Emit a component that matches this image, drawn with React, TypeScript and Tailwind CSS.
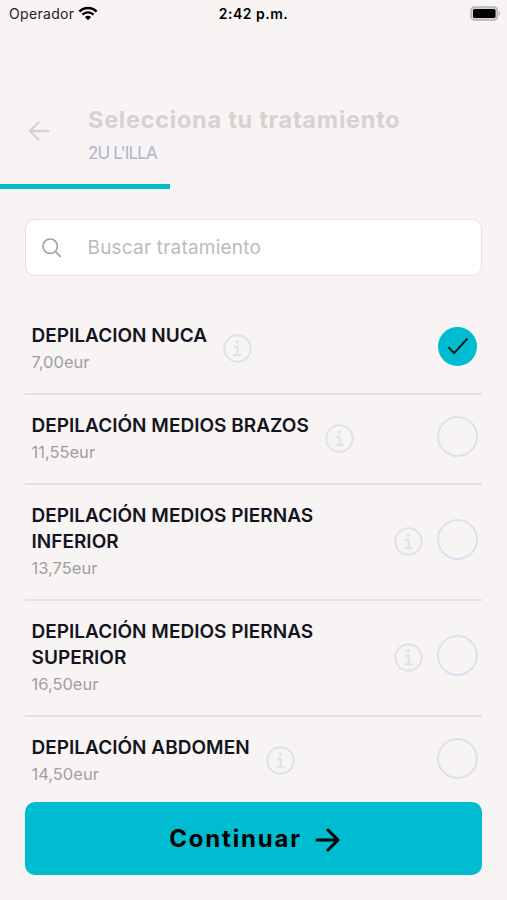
import React, {useState} from "react";


interface TreatmentItem {
    id: number
    name: string
    price: string
}

interface TreatmentProps {
    treatment: TreatmentItem
    checked: boolean
    toggle: (id: number) => void
}

const treatments: TreatmentItem[] = [
    {id: 1, name: 'DEPILACION NUCA', price: '7,00eur'},
    {id: 2, name: 'DEPILACIÓN MEDIOS BRAZOS', price: '11,55eur'},
    {id: 3, name: 'DEPILACIÓN MEDIOS PIERNAS INFERIOR', price: '13,75eur'},
    {id: 4, name: 'DEPILACIÓN MEDIOS PIERNAS SUPERIOR', price: '16,50eur'},
    {id: 5, name: 'DEPILACIÓN ABDOMEN', price: '14,50eur'},
]

function StatusBar() {
    return (
        <div className="grid h-7 grid-cols-3 items-center text-[14px] leading-7 text-[#222]">
            <div className="flex items-center pl-[9px]">
                <span className="tracking-[0.33px]">Operador</span>
                <svg className="ml-[4px] -mt-[2px]" width="20" height="15" viewBox="0 0 20 15" fill="none" stroke="#000">
                    <path d="M1.4 5.6a12.2 12.2 0 0 1 17.2 0" strokeWidth="2.6"/>
                    <path d="M4.4 8.7a7.9 7.9 0 0 1 11.2 0" strokeWidth="2.4"/>
                    <path d="M10 14.2 6.9 11.1a4.4 4.4 0 0 1 6.2 0Z" fill="#000" stroke="none"/>
                </svg>
            </div>
            <span className="text-center font-semibold tracking-[0.5px] text-black">2:42 p.m.</span>
            <svg className="mr-[6px] -mt-[2px] justify-self-end" width="31" height="15" viewBox="0 0 31 15">
                <rect x="1" y="1" width="26.5" height="13" rx="3.6" fill="#d5d2d1" stroke="#b5b3b2" strokeWidth="1.4"/>
                <rect x="3" y="3" width="22.5" height="9" rx="1.6" fill="#000"/>
                <path d="M28.8 5.2c1.8.9 1.8 3.7 0 4.6Z" fill="#b5b3b2"/>
            </svg>
        </div>
    )
}

function InfoIcon() {
    return (
        <svg className="mr-[14px] mb-[2px] shrink-0" width="29" height="29" viewBox="0 0 29 29" fill="none" stroke="#dbe2ee" strokeWidth="2">
            <circle cx="14.5" cy="14.5" r="13.2"/>
            <circle cx="14.2" cy="8" r="1.7" fill="#dbe2ee" stroke="none"/>
            <path d="M11.3 12.7h3.4v8.3M10.4 21.3h8.4"/>
        </svg>
    )
}

function Treatment({ treatment, checked, toggle }: TreatmentProps) {
    return (
        <div className="flex shrink-0 items-center border-b-2 border-[#e5e2e1] pt-[18px] pr-1 pb-[18px] pl-[6.5px] last:border-b-0">
            <div className="mr-4 min-w-0">
                <p className="text-[19px] leading-[26px] font-semibold tracking-[0.02px] text-[#141420]">{treatment.name}</p>
                <p className="text-[16.5px] leading-[26px] text-[#a09fa2]">{treatment.price}</p>
            </div>
            <InfoIcon/>
            <button className="mb-1.5 ml-auto flex size-[41px] shrink-0 items-center justify-center"
                    onClick={() => toggle(treatment.id)}>
                { checked
                    ? <span className="flex size-[39px] items-center justify-center rounded-full bg-[#00bcd0]">
                        <svg width="22" height="18" viewBox="0 0 22 18" fill="none" stroke="#0c1a1e" strokeWidth="2">
                            <path d="m1.5 10.3 5.6 5.8L20.5 1.5"/>
                        </svg>
                    </span>
                    : <span className="size-[41px] rounded-full border-2 border-[#dbe2ee]"/>}
            </button>
        </div>
    )
}

export default function App() {
    const [selected, setSelected] = useState<number[]>([1])

    const toggleHandler = (id: number) => {
        setSelected(selected.includes(id) ? selected.filter(s => s !== id) : [...selected, id])
    }

    return (
        <div className="flex h-[900px] w-[507px] flex-col overflow-hidden bg-[#f7f4f3] font-['Inter',sans-serif]">
            <StatusBar/>

            <header className="mt-[76px] flex h-[80px] items-start">
                <svg className="mt-[17px] ml-[28px] shrink-0" width="22" height="20" viewBox="0 0 22 20" fill="none"
                     stroke="#d5d3d2" strokeWidth="2.4" strokeLinecap="round" strokeLinejoin="round">
                    <path d="M20 10H2M10.5 1.5 2 10l8.5 8.5"/>
                </svg>
                <div className="ml-[38px]">
                    <h1 className="text-[23.5px] leading-8 font-bold tracking-[0.74px] whitespace-nowrap text-[#d5d3d2]">Selecciona tu tratamiento</h1>
                    <p className="mt-[5px] text-[17px] leading-6 tracking-[-0.85px] text-[#b0b4c6]">2U L'ILLA</p>
                </div>
            </header>
            <div className="h-[5px] w-[170px] shrink-0 bg-[#00bcc9]"/>

            <label className="mx-[25px] mt-[30px] flex h-[57px] shrink-0 items-center rounded-[10px] border-[1.5px] border-[#e5e2e1] bg-white">
                <svg className="ml-[16px]" width="20" height="20" viewBox="0 0 20 20" fill="none" stroke="#a3a3a6" strokeWidth="1.7">
                    <circle cx="8.2" cy="8.2" r="7.2"/>
                    <path d="m13.3 13.3 5.5 5.5"/>
                </svg>
                <input className="mt-px ml-[25.5px] w-[360px] bg-transparent text-[19px] tracking-[0.2px] outline-none placeholder:text-[#bbbbbf]"
                       placeholder="Buscar tratamiento"/>
            </label>

            <main className="mx-[25px] mt-[29px] flex h-[497px] shrink-0 flex-col overflow-hidden">
                {treatments.map(t => (
                    <Treatment key={t.id} treatment={t} checked={selected.includes(t.id)} toggle={toggleHandler}/>
                ))}
            </main>

            <button className="mx-[25px] flex h-[73px] shrink-0 items-center justify-center rounded-[10px] bg-[#00bcd0] pl-[2px] text-black">
                <span className="text-[24px] font-bold tracking-[1.8px]">Continuar</span>
                <svg className="mt-[3px] ml-[13px]" width="25" height="24" viewBox="0 0 25 24" fill="none" stroke="currentColor"
                     strokeWidth="3" strokeLinecap="round" strokeLinejoin="round">
                    <path d="M2 12h21M13 2l10 10-10 10"/>
                </svg>
            </button>
        </div>
    )
}
